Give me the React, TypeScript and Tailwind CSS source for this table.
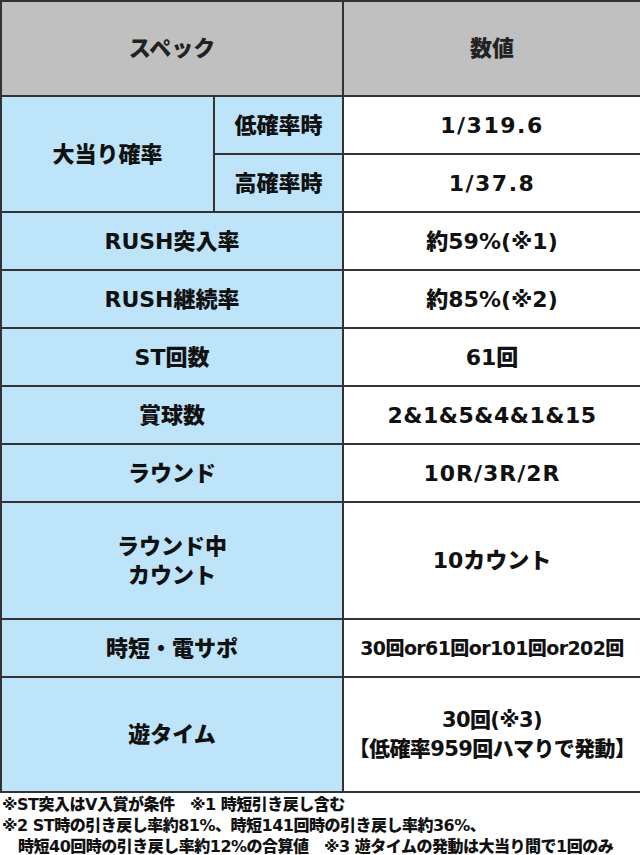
const font = "font-['DejaVu_Sans','Noto_Sans_CJK_JP',sans-serif]"

type Row = { label: string[]; value: string[]; h: string; valueCls?: string }

const rows: Row[] = [
  { label: ["RUSH突入率"], value: ["約59%(※1)"], h: "h-[58px]" },
  { label: ["RUSH継続率"], value: ["約85%(※2)"], h: "h-[58px]" },
  { label: ["ST回数"], value: ["61回"], h: "h-[58px]" },
  { label: ["賞球数"], value: ["2&1&5&4&1&15"], h: "h-[58px]", valueCls: "text-[22px] tracking-[0.5px]" },
  { label: ["ラウンド"], value: ["10R/3R/2R"], h: "h-[58px]", valueCls: "text-[22px] tracking-[1px]" },
  { label: ["ラウンド中", "カウント"], value: ["10カウント"], h: "h-[117px]" },
  { label: ["時短・電サポ"], value: ["30回or61回or101回or202回"], h: "h-[58px]", valueCls: "text-[19px] tracking-[-0.6px]" },
  { label: ["遊タイム"], value: ["30回(※3)", "【低確率959回ハマりで発動】"], h: "h-[115px]", valueCls: "text-[21px] tracking-[-0.6px]" },
]

const cell = "border-2 border-[#333] text-center align-middle font-black text-[#111] whitespace-nowrap"

export default function App() {
  return (
    <div className={`w-[640px] h-[855px] bg-white overflow-hidden ${font}`}>
      <table className="w-[640px] table-fixed border-collapse">
        <colgroup>
          <col className="w-[213px]" />
          <col className="w-[129px]" />
          <col className="w-[298px]" />
        </colgroup>
        <tbody>
          <tr className="h-[95px] bg-[#c0c0c0]">
            <td colSpan={2} className={`${cell} text-[22px] text-[#222]`}>スペック</td>
            <td className={`${cell} text-[22px] text-[#222]`}>数値</td>
          </tr>
          <tr className="h-[58px]">
            <td rowSpan={2} className={`${cell} bg-[#bde4f8] text-[22px]`}>大当り確率</td>
            <td className={`${cell} bg-[#bde4f8] text-[22px]`}>低確率時</td>
            <td className={`${cell} text-[22px] tracking-[1.5px]`}>1/319.6</td>
          </tr>
          <tr className="h-[58px]">
            <td className={`${cell} bg-[#bde4f8] text-[22px]`}>高確率時</td>
            <td className={`${cell} text-[22px] tracking-[1.5px]`}>1/37.8</td>
          </tr>
          {rows.map((r) => (
            <tr key={r.label.join("")} className={r.h}>
              <td colSpan={2} className={`${cell} bg-[#bde4f8] text-[22px] leading-[29px]`}>
                {r.label.map((l) => (
                  <div key={l}>{l}</div>
                ))}
              </td>
              <td className={`${cell} leading-[29px] ${r.valueCls ?? "text-[22px]"}`}>
                {r.value.map((v) => (
                  <div key={v}>{v}</div>
                ))}
              </td>
            </tr>
          ))}
        </tbody>
      </table>
      <div className="pt-[1px] pl-[2px] text-[16px] leading-[21px] font-black text-[#111] tracking-[-0.5px] whitespace-nowrap">
        <div>※ST突入はV入賞が条件　※1 時短引き戻し含む</div>
        <div>※2 ST時の引き戻し率約81%、時短141回時の引き戻し率約36%、</div>
        <div className="pl-[16px]">時短40回時の引き戻し率約12%の合算値　※3 遊タイムの発動は大当り間で1回のみ</div>
      </div>
    </div>
  )
}
